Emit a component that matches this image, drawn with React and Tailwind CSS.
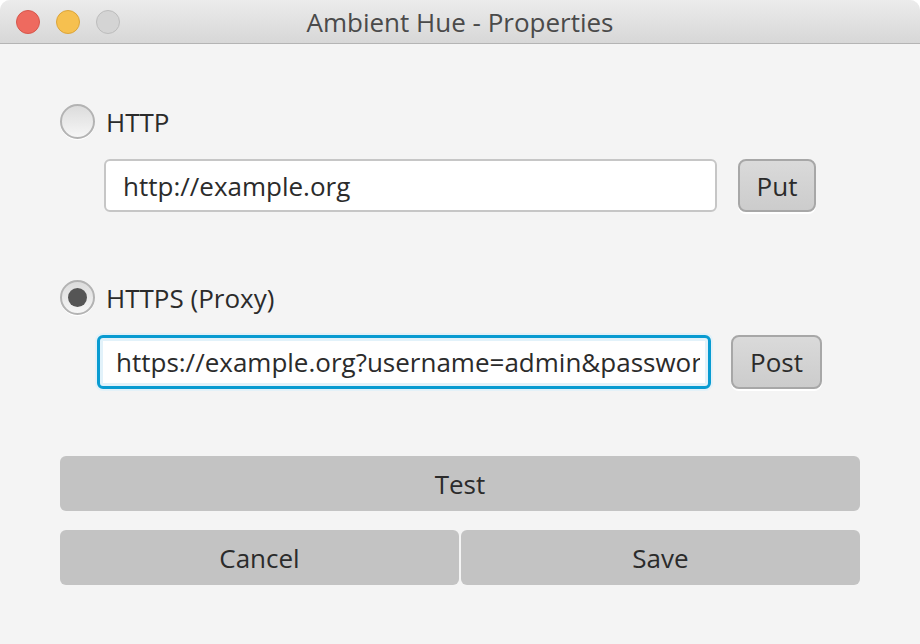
import React from 'react';

const font = { fontFamily: '"Open Sans", "Liberation Sans", sans-serif' };

function Radio({ checked }) {
  return (
    <div className="w-[35px] h-[35px] rounded-full border-2 border-[#b3b3b3] bg-gradient-to-b from-[#dcdcdc] to-[#f6f6f6] flex items-center justify-center shadow-[0_1px_0_#ffffff]">
      {checked && <div className="w-[19px] h-[19px] rounded-full bg-[#555555]" />}
    </div>
  );
}

function SmallButton({ label, className = '' }) {
  return (
    <div
      className={`flex items-center justify-center rounded-[8px] border-2 border-[#a7a7a7] bg-gradient-to-b from-[#dadada] to-[#cccccc] text-[26px] leading-none text-[#2b2b2b] shadow-[0_2px_0_#ffffff] ${className}`}
    >
      {label}
    </div>
  );
}

export default function App() {
  return (
    <div className="w-[920px] h-[644px] bg-white" style={font}>
      <div className="w-full h-full flex flex-col rounded-t-[10px] overflow-hidden bg-[#f4f4f4]">
        {/* Title bar */}
        <div className="relative h-[44px] shrink-0 flex items-center justify-center bg-gradient-to-b from-[#ececec] to-[#d7d7d7] border-b border-[#b4b4b4]">
          <div className="absolute left-[16px] top-[10px] flex gap-[16px]">
            <div className="w-[24px] h-[24px] rounded-full bg-[#ee6a5f] border border-[#d6574c]" />
            <div className="w-[24px] h-[24px] rounded-full bg-[#f6c04f] border border-[#dba43a]" />
            <div className="w-[24px] h-[24px] rounded-full bg-[#d4d4d4] border border-[#bcbcbc]" />
          </div>
          <span className="text-[26px] text-[#4a4a4a] leading-none">Ambient Hue - Properties</span>
        </div>

        {/* Content */}
        <div className="flex flex-col px-[60px] text-[#2b2b2b]">
          {/* HTTP */}
          <div className="mt-[60px] flex items-center gap-[11px] h-[35px]">
            <Radio />
            <span className="text-[26px] leading-none">HTTP</span>
          </div>
          <div className="mt-[20px] flex items-center">
            <div className="ml-[44px] w-[613px] h-[53px] rounded-[6px] border-2 border-[#c6c6c6] bg-white flex items-center pl-[17px] text-[26px] leading-none">
              http://example.org
            </div>
            <SmallButton label="Put" className="ml-[21px] w-[78px] h-[53px]" />
          </div>

          {/* HTTPS */}
          <div className="mt-[68px] flex items-center gap-[11px] h-[35px]">
            <Radio checked />
            <span className="text-[26px] leading-none">HTTPS (Proxy)</span>
          </div>
          <div className="mt-[20px] flex items-center">
            <div className="ml-[37px] w-[614px] h-[54px] rounded-[6px] border-[3px] border-[#089bd1] bg-white flex items-center pl-[16px] pr-[8px] shadow-[0_0_0_2px_#e3f1f8,inset_0_0_0_3px_#e2f2fa] text-[26px] leading-none">
              <div className="flex-1 overflow-hidden whitespace-nowrap py-[4px]">
                https://example.org?username=admin&amp;password=secret
              </div>
            </div>
            <SmallButton label="Post" className="ml-[20px] w-[91px] h-[54px]" />
          </div>

          {/* Test */}
          <div className="mt-[67px] h-[55px] rounded-[6px] bg-[#c3c3c3] flex items-center justify-center text-[26px] leading-none">
            Test
          </div>
          <div className="mt-[19px] flex gap-[2px]">
            <div className="flex-1 h-[55px] rounded-[6px] bg-[#c3c3c3] flex items-center justify-center text-[26px] leading-none">
              Cancel
            </div>
            <div className="flex-1 h-[55px] rounded-[6px] bg-[#c3c3c3] flex items-center justify-center text-[26px] leading-none">
              Save
            </div>
          </div>
        </div>
      </div>
    </div>
  );
}
